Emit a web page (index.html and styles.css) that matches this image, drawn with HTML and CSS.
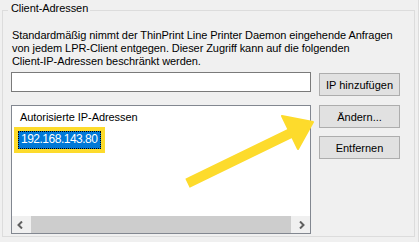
FILE: index.html
```html
<!DOCTYPE html>
<html>
  <head>
    <title>Client-Adressen</title>
    <meta name="viewport" content="width=device-width, initial-scale=1.0" />
    <link rel="stylesheet" href="styles.css">
  </head>
  <body>
    <div class="window">
      <fieldset class="group">
        <legend>Client-Adressen</legend>
        <p class="info">
          Standardmäßig nimmt der ThinPrint Line Printer Daemon eingehende Anfragen<br />
          von jedem LPR-Client entgegen. Dieser Zugriff kann auf die folgenden<br />
          Client-IP-Adressen beschränkt werden.
        </p>
        <div class="row add-row">
          <input class="ip-input" type="text" />
          <button class="btn add-btn">IP hinzufügen</button>
        </div>
        <div class="row list-row">
          <div class="listbox">
            <div class="list-body">
              <div class="list-header">Autorisierte IP-Adressen</div>
              <div class="item-frame">
                <div class="list-item selected">192.168.143.80</div>
              </div>
            </div>
            <div class="hscroll">
              <span class="arrow">
                <svg width="7" height="8" viewBox="0 0 7 8"><path d="M5 0.5 L1.5 4 L5 7.5" fill="none" stroke="#606060" stroke-width="2" /></svg>
              </span>
              <span class="thumb"></span>
              <span class="arrow">
                <svg width="7" height="8" viewBox="0 0 7 8"><path d="M2 0.5 L5.5 4 L2 7.5" fill="none" stroke="#606060" stroke-width="2" /></svg>
              </span>
            </div>
          </div>
          <div class="side-buttons">
            <button class="btn">Ändern...</button>
            <button class="btn">Entfernen</button>
          </div>
        </div>
      </fieldset>
      <!-- yellow annotation arrow drawn over the dialog -->
      <svg class="pointer" width="419" height="242" viewBox="0 0 419 242">
        <line x1="192" y1="181" x2="291" y2="133" stroke="#fddb2c" stroke-width="10" stroke-linecap="square" />
        <polygon points="282,116 313,122 298,149" fill="#fddb2c" stroke="#fddb2c" stroke-width="2" stroke-linejoin="round" />
      </svg>
    </div>
  </body>
</html>
```

FILE: styles.css
```css
html,
body {
  margin: 0;
  padding: 0;
  background: #f0f0f0;
}
body {
  font-family: "Liberation Sans", Arial, sans-serif;
  font-size: 11px;
  letter-spacing: -0.07px;
  color: #000;
}
.window {
  position: relative;
  width: 418px;
  height: 242px;
  border-right: 1px solid #dcdcdc;
  overflow: hidden;
}
.group {
  margin: 2px 3px 0 2px;
  padding: 0 14px 5px 8px;
  border: 1px solid #dcdcdc;
  height: 235px;
  box-sizing: border-box;
  min-width: 0;
}
.group legend {
  margin-left: -3px;
  padding: 0 2px 4px 3px;
  line-height: 13px;
}
.info {
  margin: 10px 0 0 1px;
  line-height: 13px;
}
.row {
  display: flex;
  gap: 8px;
}
.add-row {
  margin-top: 4px;
  align-items: flex-start;
}
.ip-input {
  width: 300px;
  height: 20px;
  margin: 0;
  padding: 0 3px;
  box-sizing: border-box;
  border: 1px solid #7a7a7a;
  background: #fff;
  font: inherit;
  outline: none;
}
.btn {
  width: 81px;
  height: 23px;
  margin: 0;
  padding: 0;
  background: #e1e1e1;
  border: 1px solid #adadad;
  border-radius: 0;
  font: inherit;
  color: #000;
}
.add-btn {
  margin-top: 1px;
}
.list-row {
  margin-top: 9px;
}
.listbox {
  width: 300px;
  height: 129px;
  box-sizing: border-box;
  border: 1px solid #828790;
  background: #fff;
  display: flex;
  flex-direction: column;
}
.list-body {
  flex: 1;
  padding: 5px 0 0 2px;
}
.list-header {
  padding-left: 6px;
  line-height: 13px;
  height: 16px;
}
.item-frame {
  display: inline-block;
  border: 4px solid #fddb2c;
}
.list-item {
  width: 83px;
  height: 18px;
  line-height: 17px;
  padding-left: 3px;
  box-sizing: border-box;
  font-size: 12px;
  letter-spacing: -0.5px;
}
.selected {
  background: #0078d7;
  color: #fff;
  outline: 1px dotted #000;
  outline-offset: -1px;
}
.hscroll {
  height: 17px;
  display: flex;
  background: #f0f0f0;
}
.hscroll .arrow {
  width: 17px;
  display: flex;
  align-items: center;
  justify-content: center;
}
.hscroll .thumb {
  flex: 1;
  margin: 0 2px;
  background: #cdcdcd;
}
.side-buttons {
  display: flex;
  flex-direction: column;
  gap: 8px;
}
.pointer {
  position: absolute;
  left: 0;
  top: 0;
  pointer-events: none;
}
```
